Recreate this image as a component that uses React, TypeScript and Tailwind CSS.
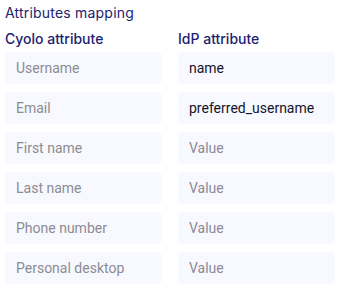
import React from "react";

const rows: { label: string; value: string; filled: boolean }[] = [
  { label: "Username", value: "name", filled: true },
  { label: "Email", value: "preferred_username", filled: true },
  { label: "First name", value: "Value", filled: false },
  { label: "Last name", value: "Value", filled: false },
  { label: "Phone number", value: "Value", filled: false },
  { label: "Personal desktop", value: "Value", filled: false },
];

export default function App() {
  return (
    <div className="w-[345px] h-[294px] bg-white pl-[5px] pt-[3px]" style={{ fontFamily: "Inter, 'Open Sans', sans-serif" }}>
      <div className="text-[14px] leading-[20px] text-[#1c2270] tracking-[0.2px]">Attributes mapping</div>
      <div className="grid grid-cols-[157px_157px] gap-x-[16px] mt-[6px]">
        <div className="text-[14px] leading-[20px] font-medium text-[#1c2270]">Cyolo attribute</div>
        <div className="text-[14px] leading-[20px] font-medium text-[#1c2270]">IdP attribute</div>
      </div>
      <div className="grid grid-cols-[157px_157px] gap-x-[16px] gap-y-[8px] mt-[3px]" style={{ fontFamily: "Roboto, sans-serif" }}>
        {rows.map((r) => (
          <React.Fragment key={r.label}>
            <div className="h-[32px] rounded-[5px] bg-[#f8f9fe] flex items-center pl-[11px] text-[14px] text-[#8b8c94]">
              {r.label}
            </div>
            <div
              className={
                "h-[32px] rounded-[5px] bg-[#f8f9fe] flex items-center pl-[11px] text-[14px] " +
                (r.filled ? "text-[#14142b]" : "text-[#8b8c94]")
              }
            >
              {r.value}
            </div>
          </React.Fragment>
        ))}
      </div>
    </div>
  );
}
